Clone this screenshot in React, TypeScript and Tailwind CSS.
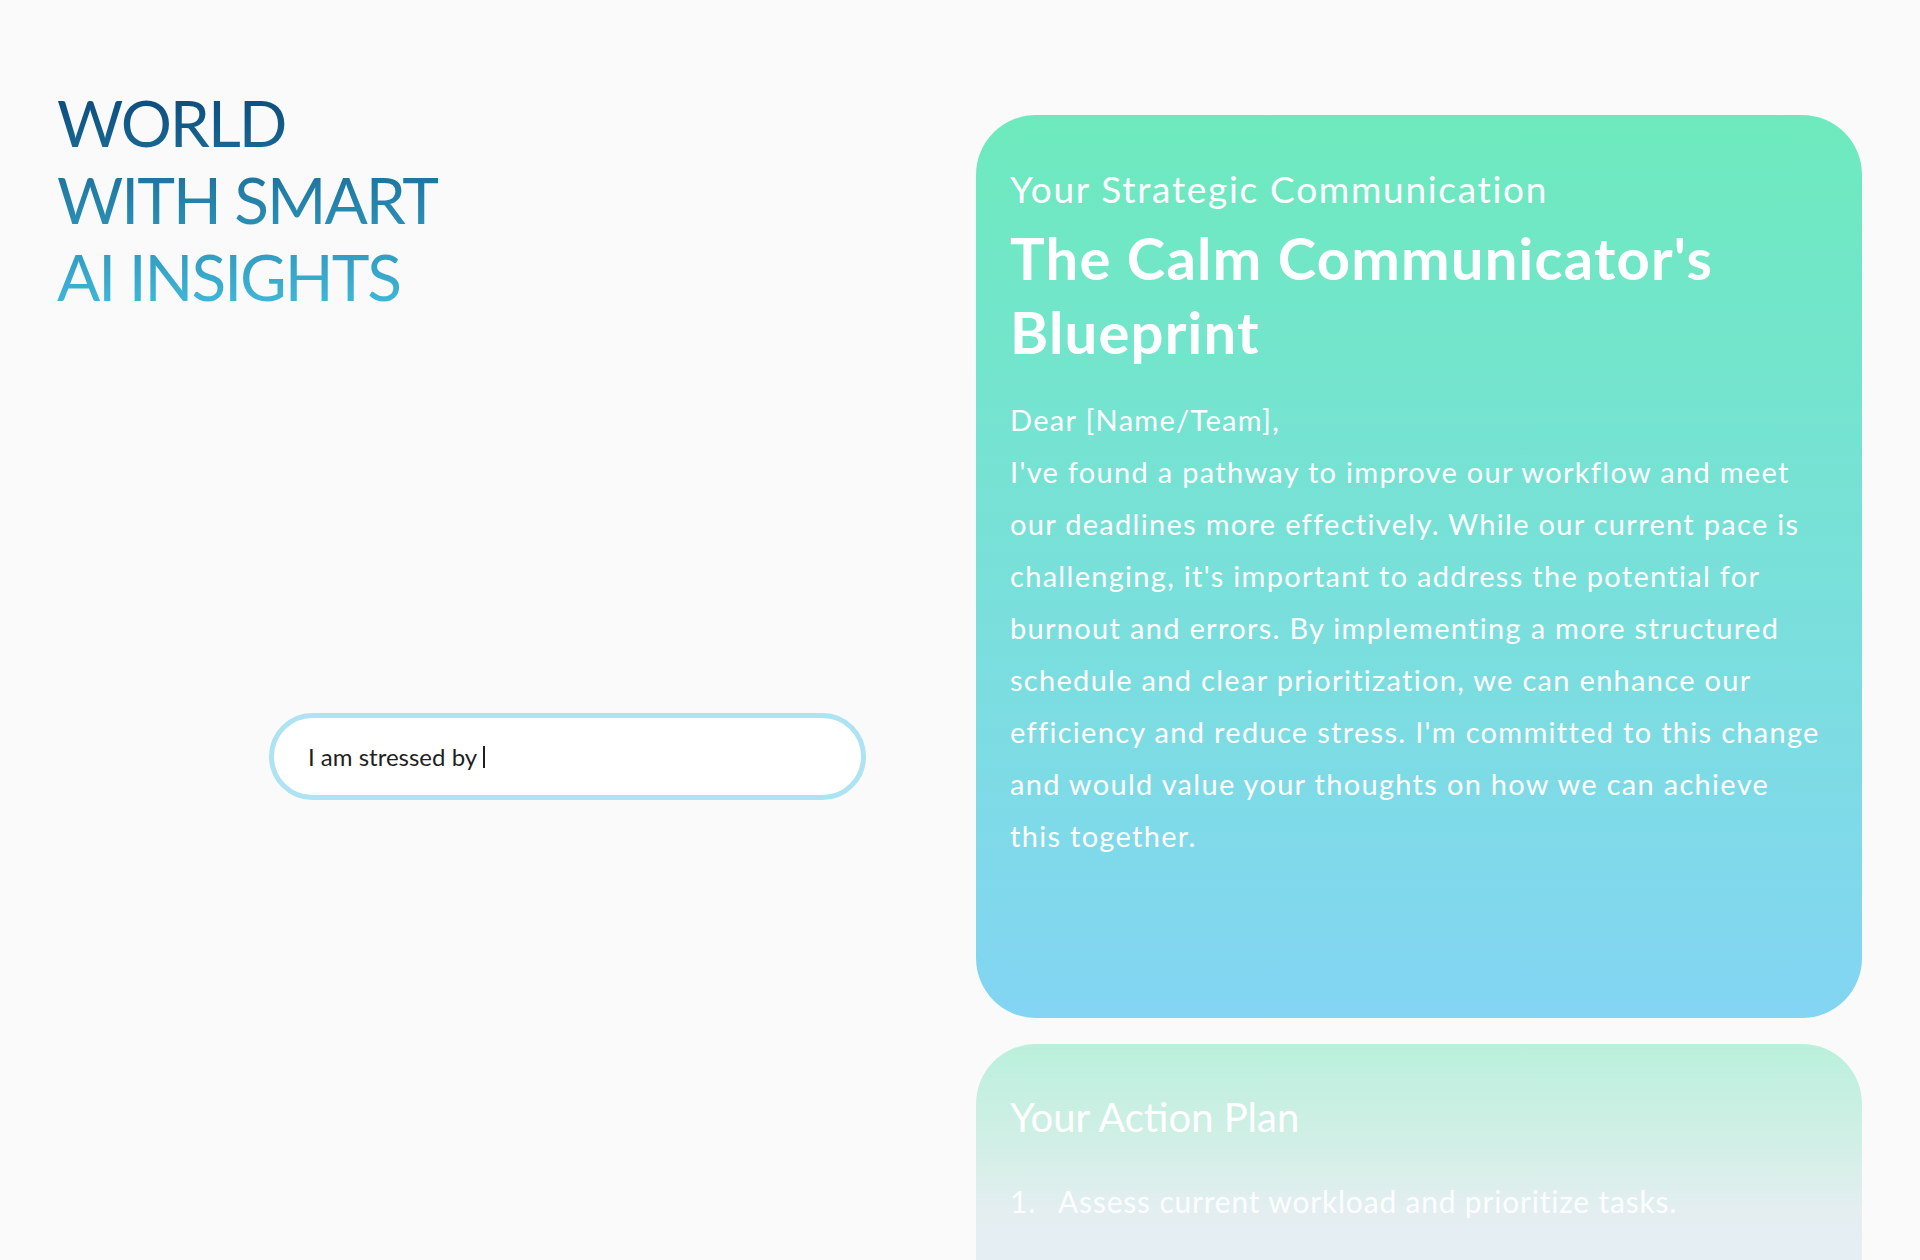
import React from "react";

export default function App() {
  const font = { fontFamily: "Lato, 'Noto Sans', sans-serif" };
  return (
    <div
      className="w-[1920px] h-[1260px] overflow-hidden bg-[#fafafa] flex"
      style={font}
    >
      <div className="w-[976px] shrink-0 flex flex-col">
        <h1 className="mt-[84px] ml-[57px] text-[64px] leading-[77px] tracking-[-2px] font-normal bg-gradient-to-b from-[#0a4677] via-[#2482aa] to-[#43bddc] bg-clip-text text-transparent w-fit">
          WORLD
          <br />
          WITH SMART
          <br />
          AI INSIGHTS
        </h1>
        <div className="mt-[398px] ml-[269px] w-[597px] h-[87px] rounded-full border-[5px] border-[#ade3f2] bg-white flex items-center pl-[34px]">
          <span className="text-[24px] text-[#1f1f1f] leading-none">I am stressed by</span>
          <span className="inline-block w-[2px] h-[22px] bg-[#1f1f1f] ml-[6px]" />
        </div>
      </div>
      <div className="w-[886px] shrink-0 pt-[115px] flex flex-col gap-[26px]">
        <div className="h-[903px] shrink-0 rounded-[60px] bg-gradient-to-b from-[#6deabd] to-[#83d5f3] pt-[52px] px-[34px] text-white">
          <div className="text-[37px] leading-[44px] tracking-[1.7px]">Your Strategic Communication</div>
          <h2 className="mt-[10px] text-[58px] leading-[74px] font-bold tracking-[1.2px]">
            The Calm Communicator's Blueprint
          </h2>
          <div className="mt-[25px] text-[29px] leading-[52px] tracking-[1.3px]">
            <p>Dear [Name/Team],</p>
            <p>
              I've found a pathway to improve our workflow and meet our deadlines more effectively. While our current pace is challenging, it's important to address the potential for burnout and errors. By implementing a more structured schedule and clear prioritization, we can enhance our efficiency and reduce stress. I'm committed to this change and would value your thoughts on how we can achieve this together.
            </p>
          </div>
        </div>
        <div className="h-[400px] shrink-0 rounded-[60px] bg-[linear-gradient(180deg,#baf0dc_0px,#d2efe6_100px,#e4eef1_170px,#eaeff7_100%)] pt-[49px] px-[34px] text-white">
          <div className="text-[40px] leading-[48px]">Your Action Plan</div>
          <div className="mt-[38px] flex text-[30px] leading-[45px] tracking-[0.8px] text-white/90">
            <span className="w-[48px] shrink-0">1.</span>
            <span>Assess current workload and prioritize tasks.</span>
          </div>
        </div>
      </div>
    </div>
  );
}
